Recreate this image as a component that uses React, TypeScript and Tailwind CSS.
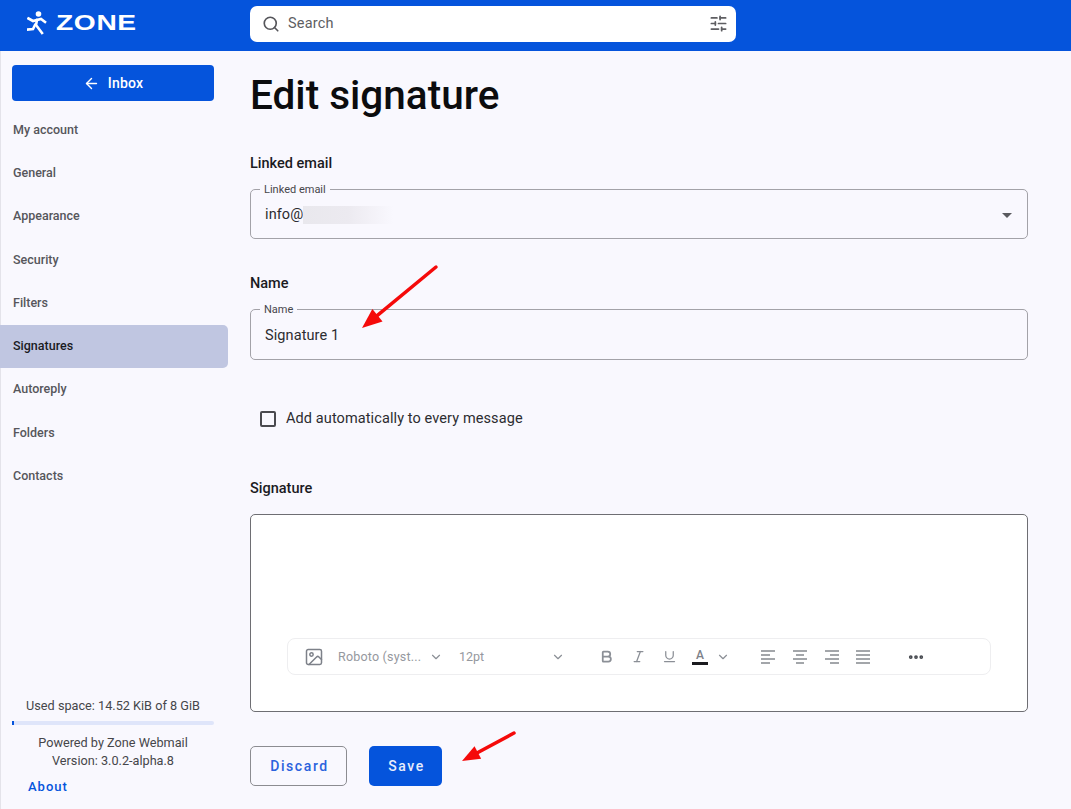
import { ArrowLeft, Search, SlidersHorizontal, ChevronDown, Bold, Italic, Underline, MoreHorizontal, Image } from "lucide-react";

const nav = ["My account", "General", "Appearance", "Security", "Filters", "Signatures", "Autoreply", "Folders", "Contacts"];

function Logo() {
  return (
    <div className="flex items-center gap-[9px] text-white">
      <svg width="20" height="24" viewBox="0 0 20 24" fill="none" stroke="white" strokeWidth="2.6" strokeLinecap="square">
        <circle cx="11.5" cy="3" r="2.8" fill="white" stroke="none" />
        <path d="M1.5 7.5 L6 10 L14 8 L18 11" />
        <path d="M10 9 L9 14 L15 22" />
        <path d="M8 14 L6 18 L1 18.5" />
      </svg>
      <span className="text-[22px] leading-none font-bold tracking-[0.5px] font-['Liberation_Sans',sans-serif] [transform:scaleX(1.28)] origin-left">ZONE</span>
    </div>
  );
}

function Arrow({ x1, y1, x2, y2, len, w }: { x1: number; y1: number; x2: number; y2: number; len: number; w: number }) {
  const a = Math.atan2(y2 - y1, x2 - x1);
  const bx = x2 - Math.cos(a) * len;
  const by = y2 - Math.sin(a) * len;
  const px = -Math.sin(a) * w;
  const py = Math.cos(a) * w;
  return (
    <svg className="absolute left-0 top-0 pointer-events-none" width="1071" height="809" viewBox="0 0 1071 809">
      <line x1={x1} y1={y1} x2={bx} y2={by} stroke="#f50a0a" strokeWidth="3.5" strokeLinecap="round" />
      <polygon points={`${x2},${y2} ${bx + px},${by + py} ${bx - px},${by - py}`} fill="#f50a0a" />
    </svg>
  );
}

function AlignIcon({ lines, className }: { lines: [number, number][]; className?: string }) {
  return (
    <svg className={className} width="16" height="14" viewBox="0 0 16 14" stroke="#85888e" strokeWidth="1.5">
      {lines.map(([a, b], i) => (
        <line key={i} x1={a} x2={b} y1={1 + i * 4} y2={1 + i * 4} />
      ))}
    </svg>
  );
}

function Field({ label, tall, children }: { label: string; tall?: boolean; children: React.ReactNode }) {
  return (
    <fieldset className={(tall ? "h-[56px]" : "h-[55px]") + " border border-[#a3a2a8] rounded-[5px] px-[9px] pb-[3px] -mt-[6px] flex items-center"}>
      <legend className="text-[11px] leading-[11px] text-[#46464a] px-[4px] ml-0">{label}</legend>
      {children}
    </fieldset>
  );
}

export default function App() {
  return (
    <div className="relative w-[1071px] h-[809px] overflow-hidden bg-[#f9f8fe] font-['Roboto',sans-serif] text-[#1b1b1f] flex flex-col">
      <header className="h-[51px] shrink-0 bg-[#0554dc] flex items-center">
        <div className="w-[250px] pl-[27px] shrink-0 mb-[6px]"><Logo /></div>
        <div className="w-[486px] h-[36px] mb-[4px] bg-white rounded-[7px] flex items-center pl-[12px] pr-[8px] text-[#5e5e62]">
          <Search size={18} strokeWidth={2.2} className="text-[#55555a]" />
          <span className="ml-[8px] text-[14.5px] tracking-[0.2px] flex-1">Search</span>
          <SlidersHorizontal size={19} strokeWidth={2.2} className="text-[#5e5e62]" />
        </div>
      </header>
      <div className="flex-1 flex min-h-0">
        <aside className="w-[228px] shrink-0 border-l border-[#e4e3ea] flex flex-col pt-[14px] pb-[14px]">
          <button className="ml-[11px] w-[202px] h-[36px] bg-[#0554dc] rounded-[4px] text-white text-[14px] tracking-[0.2px] font-medium flex items-center justify-center gap-[8px]">
            <ArrowLeft size={17} strokeWidth={2} />
            Inbox
          </button>
          <nav className="mt-[7.5px] flex flex-col">
            {nav.map((n) => (
              <div
                key={n}
                className={
                  n === "Signatures"
                    ? "h-[43.25px] -ml-px pl-[13px] flex items-center rounded-r-[5px] bg-[#c0c6e1] text-[12.5px] font-medium text-[#1b1b1f]"
                    : "h-[43.25px] pl-[12px] flex items-center text-[12.5px] font-medium text-[#56565b]"
                }
              >
                {n}
              </div>
            ))}
          </nav>
          <div className="mt-auto flex flex-col pl-[11px]">
            <div className="w-[202px] text-center text-[12.7px] leading-[16px] text-[#46464a] font-normal">Used space: 14.52 KiB of 8 GiB</div>
            <div className="w-[202px] h-[4px] mt-[7px] rounded-sm bg-[#dfe5fa]"><div className="w-[2px] h-[4px] bg-[#0554dc]" /></div>
            <div className="w-[202px] mt-[9px] text-center text-[12.7px] leading-[18px] text-[#46464a]">Powered by Zone Webmail<br />Version: 3.0.2-alpha.8</div>
            <div className="mt-[9px] ml-[16px] text-[13px] leading-[16px] font-medium tracking-[1px] text-[#0554dc]">About</div>
          </div>
        </aside>
        <main className="flex-1 pl-[22px] pr-[43px]">
          <h1 className="mt-[17px] text-[40.5px] leading-[54px] font-medium text-[#0c0c0e]">Edit signature</h1>
          <div className="mt-[33px] text-[14.5px] leading-[18px] font-medium">Linked email</div>
          <div className="mt-[17px]">
            <Field label="Linked email">
              <span className="text-[14.5px] tracking-[0.1px] text-[#2c2c30] ml-[5px]">info@</span>
              <span className="w-[90px] h-[18px] bg-gradient-to-r from-[#e9e8ed] via-[#eceaf0] to-[#f9f8fe]" />
              <svg className="ml-auto mr-[6px]" width="10" height="5" viewBox="0 0 10 5"><path d="M0 0h10L5 5z" fill="#5a5a5f" /></svg>
            </Field>
          </div>
          <div className="mt-[36px] text-[14.5px] leading-[18px] font-medium">Name</div>
          <div className="mt-[17px]">
            <Field label="Name" tall>
              <span className="text-[14.5px] tracking-[0.1px] text-[#2c2c30] ml-[5px]">Signature 1</span>
            </Field>
          </div>
          <label className="mt-[49px] ml-[10px] flex items-center gap-[10px] h-[20px]">
            <span className="w-[16px] h-[16px] border-2 border-[#4a4a4f] rounded-[2px]" />
            <span className="text-[14.5px] tracking-[0.1px] text-[#2c2c30]">Add automatically to every message</span>
          </label>
          <div className="mt-[51px] text-[14.5px] leading-[18px] font-medium">Signature</div>
          <div className="mt-[16px] h-[198px] bg-white border border-[#6e6e73] rounded-[5px] pt-[123px] px-[36px]">
            <div className="h-[37px] border border-[#eeeef0] rounded-[8px] flex items-center pl-[16px] text-[#8b8f96]">
              <Image size={20} strokeWidth={1.8} className="text-[#7d8189]" />
              <span className="ml-[14px] pt-[2px] text-[12.5px] tracking-[0.2px] w-[91px] text-[#95989e]">Roboto (syst...</span>
              <ChevronDown size={14} />
              <span className="ml-[16px] pt-[2px] text-[12.5px] w-[92px] text-[#95989e]">12pt</span>
              <ChevronDown size={14} />
              <Bold size={15} strokeWidth={2.8} className="ml-[34px]" />
              <Italic size={15} strokeWidth={2} className="ml-[17px]" />
              <Underline size={15} strokeWidth={2} className="ml-[16px]" />
              <span className="ml-[15px] w-[16px] flex flex-col items-center text-[12px] leading-[13px] font-medium text-[#7d8189]">A<span className="w-[16px] h-[3px] bg-[#1b1b1f]" /></span>
              <ChevronDown size={14} className="ml-[8px]" />
              <AlignIcon className="ml-[30px]" lines={[[1, 15], [1, 10], [1, 15], [1, 10]]} />
              <AlignIcon className="ml-[16px]" lines={[[1, 15], [4, 12], [1, 15], [4, 12]]} />
              <AlignIcon className="ml-[16px]" lines={[[1, 15], [6, 15], [1, 15], [6, 15]]} />
              <AlignIcon className="ml-[15px]" lines={[[1, 15], [1, 15], [1, 15], [1, 15]]} />
              <MoreHorizontal size={18} strokeWidth={3} className="ml-[36px] text-[#44474d]" />
            </div>
          </div>
          <div className="mt-[34px] flex gap-[22px]">
            <button className="w-[97px] h-[40px] pl-[2px] border border-[#8c8c91] rounded-[5px] text-[14px] font-medium tracking-[1.6px] text-[#2a62dd]">Discard</button>
            <button className="w-[73px] h-[40px] pl-[2px] bg-[#0554dc] rounded-[5px] text-[14px] font-medium tracking-[1.6px] text-[#e8ecfb]">Save</button>
          </div>
        </main>
      </div>
      <Arrow x1={436} y1={267} x2={362} y2={328} len={20} w={8} />
      <Arrow x1={514} y1={733} x2={462} y2={761} len={18} w={7} />
    </div>
  );
}
